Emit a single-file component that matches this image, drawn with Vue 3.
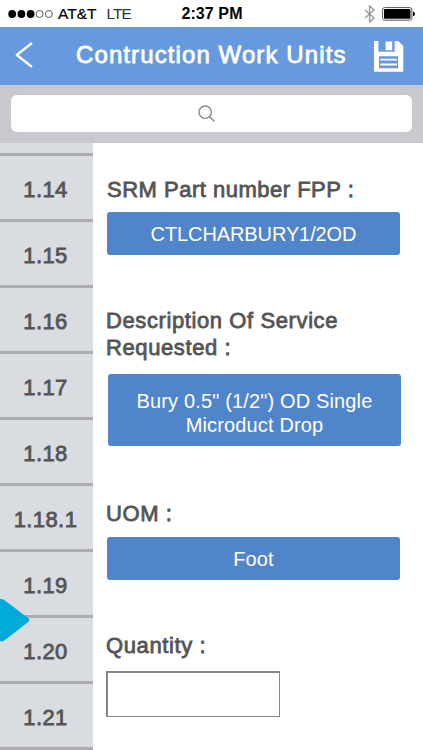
<script setup>
import {ref} from "vue";

const units = ["1.14", "1.15", "1.16", "1.17", "1.18", "1.18.1", "1.19", "1.20", "1.21"];
const quantity = ref("");
</script>

<template>
    <div class="screen">
        <div class="status-bar">
            <div class="carrier">
                <svg class="signal" width="46" height="10" viewBox="0 0 46 10">
                    <circle cx="4.2" cy="5" r="3.9" />
                    <circle cx="13.4" cy="5" r="3.9" />
                    <circle cx="22.6" cy="5" r="3.9" />
                    <circle class="empty" cx="31.6" cy="5" r="3.5" />
                    <circle class="empty" cx="40.8" cy="5" r="3.5" />
                </svg>
                <span class="name">AT&amp;T</span>
                <span class="network">LTE</span>
            </div>
            <div class="time">2:37 PM</div>
            <div class="indicators">
                <svg width="12" height="18" viewBox="0 0 12 18">
                    <path d="M1 5 L10 13 L5.6 17 V1 L10 5 L1 13" fill="none" stroke="#999" stroke-width="1.4" />
                </svg>
                <svg class="battery" width="34" height="14" viewBox="0 0 34 14">
                    <rect x="0.6" y="0.6" width="29.3" height="12.6" rx="2" fill="none" stroke="#555" stroke-width="1" />
                    <rect x="2" y="2" width="26.5" height="9.8" rx="0.8" />
                    <path d="M31 4.6 Q33 5.2 33 6.9 T31 9.2 Z" />
                </svg>
            </div>
        </div>

        <header class="nav-bar">
            <button class="back" aria-label="Back">
                <svg width="20" height="28" viewBox="0 0 20 28">
                    <path d="M17.3 2.5 L2.8 14 L17.3 25.3" fill="none" stroke="#fff" stroke-width="2.3" stroke-linecap="round" stroke-linejoin="round" />
                </svg>
            </button>
            <h1>Contruction Work Units</h1>
            <button class="save" aria-label="Save">
                <svg width="30" height="31" viewBox="0 0 30 31">
                    <path fill="#fff" fill-rule="evenodd" d="M0 0 H4.4 V10.7 H20.6 V0 H24.2 L29.3 5 V30.7 H0 Z M5 15.3 V27.3 H24 V15.3 Z" />
                    <path fill="#fff" d="M11.6 0.6 H18.2 V9.2 H11.6 Z M6.4 17.7 H22.8 V19.6 H6.4 Z M6.4 22.6 H22.8 V24.5 H6.4 Z" />
                </svg>
            </button>
        </header>

        <div class="search-bar">
            <div class="search-field">
                <svg width="18" height="18" viewBox="0 0 18 18">
                    <circle cx="7.2" cy="7.2" r="6.2" />
                    <path d="M11.7 11.7 L16.5 16.5" />
                </svg>
            </div>
        </div>

        <div class="body">
            <nav class="units">
                <div class="unit partial"></div>
                <div v-for="unit in units" :key="unit" class="unit">{{ unit }}</div>
                <svg class="marker" width="30" height="44" viewBox="0 0 30 44">
                    <path d="M0 1 H1.5 Q3 1 4.2 2 L28.4 20.3 Q30.2 22 28.4 23.7 L5 42 Q3.5 43.2 2 43.2 H0 Z" fill="#00abd8" />
                </svg>
            </nav>

            <main class="details">
                <section class="part">
                    <h2>SRM Part number FPP :</h2>
                    <button class="value code">CTLCHARBURY1/2OD</button>
                </section>
                <section class="description">
                    <h2>Description Of Service Requested :</h2>
                    <button class="value">Bury 0.5" (1/2") OD Single Microduct Drop</button>
                </section>
                <section class="uom">
                    <h2>UOM :</h2>
                    <button class="value">Foot</button>
                </section>
                <section class="quantity">
                    <h2>Quantity :</h2>
                    <input v-model="quantity" type="text" aria-label="Quantity">
                </section>
            </main>
        </div>
    </div>
</template>

<style>
body {
    background: white;
    overflow: hidden;
}
</style>

<style scoped>
* {
    box-sizing: border-box;
}

.screen {
    display: flex;
    flex-direction: column;
    width: 423px;
    height: 750px;
    overflow: hidden;
    background: white;
    font-family: "Liberation Sans", Arial, sans-serif;
}

button {
    border: none;
    padding: 0;
    background: transparent;
    font-family: inherit;
}

svg {
    display: block;
}

.status-bar {
    display: grid;
    grid-template-columns: 1fr auto 1fr;
    align-items: center;
    height: 27px;
    padding: 1px 7px 0 8px;
    font-size: 16px;
    color: black;
}

.carrier {
    display: flex;
    align-items: center;
}

.signal .empty {
    fill: none;
    stroke: #333;
    stroke-width: 0.8;
}

.name {
    margin-left: 4px;
    font-size: 15.5px;
    -webkit-text-stroke: 0.2px black;
}

.network {
    margin-left: 10px;
    color: #333;
    font-size: 15.5px;
    letter-spacing: -0.9px;
}

.time {
    font-weight: bold;
    letter-spacing: 0.1px;
}

.indicators {
    display: flex;
    justify-content: flex-end;
    align-items: center;
    gap: 6px;
}

.nav-bar {
    display: flex;
    align-items: center;
    height: 58px;
    background: #6699dd;
    color: white;
}

.back {
    margin: -3px 0 0 14px;
}

.nav-bar h1 {
    margin: 0 0 0 42px;
    width: 298px;
    padding-bottom: 3px;
    font-size: 24px;
    font-weight: normal;
    line-height: 55px;
    letter-spacing: 1.1px;
    white-space: nowrap;
    -webkit-text-stroke: 0.8px white;
}

.save {
    flex: none;
}

.search-bar {
    height: 58px;
    padding: 10px 11px 11px;
    background: #c9c8cf;
}

.search-field {
    display: flex;
    align-items: center;
    justify-content: center;
    height: 37px;
    padding-right: 9px;
    border-radius: 6px;
    background: white;
}

.search-field svg {
    fill: none;
    stroke: #8a8a8e;
    stroke-width: 1.4;
}

.body {
    display: flex;
    height: 607px;
}

.units {
    position: relative;
    flex: none;
    width: 93px;
    background: #d9dce1;
}

.unit {
    height: 66px;
    padding-right: 2px;
    border-bottom: 3px solid #adadb1;
    font-size: 22px;
    line-height: 67px;
    letter-spacing: 0.4px;
    text-align: center;
    color: #555;
    -webkit-text-stroke: 0.8px #555;
}

.unit.partial {
    height: 13px;
}

/* pull tab that sits on top of the list */
.marker {
    position: absolute;
    left: 0;
    top: 455px;
}

.details {
    display: flex;
    flex-direction: column;
    padding: 33px 0 0 14px;
}

.details h2 {
    margin: 0 0 1px -1px;
    width: 260px;
    font-size: 22px;
    font-weight: normal;
    line-height: 27px;
    letter-spacing: 0.6px;
    color: #555;
    -webkit-text-stroke: 0.8px #555;
}

.details .part h2 {
    margin-left: 0;
    letter-spacing: 0.5px;
}

.value {
    display: block;
    width: 293px;
    height: 43px;
    padding: 0 20px;
    border-radius: 3px;
    background: #5185ca;
    color: white;
    font-size: 20px;
    line-height: 24px;
    letter-spacing: 0.15px;
}

.part .value {
    margin-top: 9px;
}

.value.code {
    letter-spacing: -0.1px;
}

.description {
    margin-top: 52px;
}

.description .value {
    height: 72px;
    margin: 13px 0 0 1px;
    padding-top: 5px;
}

.uom {
    margin-top: 54px;
}

.uom .value {
    margin-top: 10px;
}

.quantity {
    margin-top: 52px;
}

.quantity input {
    display: block;
    width: 174px;
    height: 46px;
    margin: 12px 0 0 -1px;
    padding: 0 8px;
    border: 1px solid #858585;
    border-top-width: 2px;
    border-left-width: 2px;
    border-radius: 0;
    outline: none;
    background: white;
    font-family: inherit;
    font-size: 20px;
}
</style>
